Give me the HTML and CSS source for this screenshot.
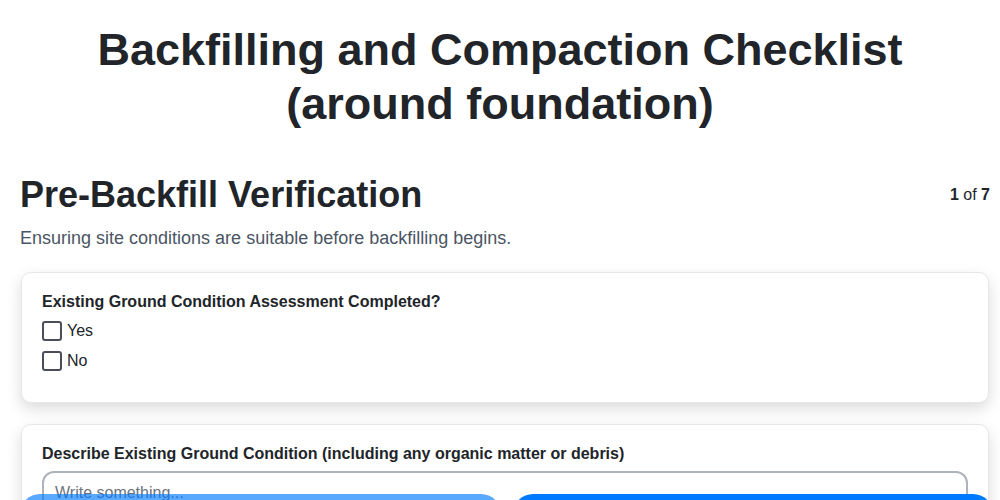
FILE: index.html
```html
<!DOCTYPE html>
<html lang="en">
<head>
<meta charset="utf-8">
<title>Backfilling and Compaction Checklist</title>
<link rel="stylesheet" href="styles.css">
</head>
<body>
<main class="page">
  <h1 class="title">Backfilling and Compaction Checklist (around foundation)</h1>
  <section class="section">
    <div class="section-head">
      <h2 class="section-title">Pre-Backfill Verification</h2>
      <div class="counter"><b>1</b> of <b>7</b></div>
    </div>
    <p class="section-desc">Ensuring site conditions are suitable before backfilling begins.</p>

    <div class="card">
      <div class="q-label">Existing Ground Condition Assessment Completed?</div>
      <label class="option"><span class="box"></span><span>Yes</span></label>
      <label class="option"><span class="box"></span><span>No</span></label>
    </div>

    <div class="card">
      <div class="q-label">Describe Existing Ground Condition (including any organic matter or debris)</div>
      <textarea class="text-input" placeholder="Write something..."></textarea>
    </div>
  </section>
</main>
<footer class="nav">
  <button class="btn btn-prev" disabled>Previous</button>
  <button class="btn btn-next">Next</button>
</footer>
</body>
</html>
```
FILE: styles.css
```css
* { box-sizing: border-box; }
html, body { margin: 0; padding: 0; background: #fff; }
body {
  font-family: "Liberation Sans", Arial, sans-serif;
  color: #212529;
}
.page {
  padding: 23px 10px 80px;
}
.title {
  margin: 0 auto;
  max-width: 860px;
  text-align: center;
  font-size: 45px;
  line-height: 54px;
  font-weight: 700;
}
.section {
  margin-top: 42px;
  padding-left: 10px;
}
.section-head {
  display: flex;
  justify-content: space-between;
  align-items: center;
}
.section-title {
  margin: 0;
  font-size: 36px;
  line-height: 43px;
  font-weight: 700;
}
.counter {
  font-size: 16px;
  color: #212529;
}
.section-desc {
  margin: 10px 0 0;
  font-size: 18px;
  line-height: 24px;
  color: #4b5563;
}
.card {
  margin-top: 22px;
  margin-left: 1px;
  margin-right: 1px;
  background: #fff;
  border: 1px solid #e5e7eb;
  border-radius: 10px;
  box-shadow: 0 6px 15px rgba(0, 0, 0, 0.14);
  padding: 19px 20px 26px;
}
.card + .card { margin-top: 21px; }
.q-label {
  font-size: 16px;
  line-height: 20px;
  font-weight: 700;
  margin-bottom: 4px;
}
.option {
  display: flex;
  align-items: center;
  gap: 5px;
  height: 30px;
  font-size: 16px;
}
.box {
  width: 20px;
  height: 20px;
  border: 2px solid #4a4d5c;
  border-radius: 3px;
  background: #fff;
}
.text-input {
  display: block;
  width: 100%;
  height: 100px;
  margin-top: 7px;
  border: 2px solid #adb3bb;
  border-radius: 12px;
  padding: 11px 11px;
  font-family: "Liberation Sans", Arial, sans-serif;
  font-size: 16px;
  color: #212529;
  resize: none;
}
.text-input::placeholder { color: #6b7280; }
.nav {
  position: fixed;
  left: 0;
  right: 0;
  bottom: -50px;
  display: flex;
  gap: 12px;
  padding: 0 7px 0 20px;
}
.btn {
  flex: 1;
  height: 56px;
  border: none;
  border-radius: 20px;
  background: #007bff;
  color: #fff;
  font-family: "Liberation Sans", Arial, sans-serif;
  font-size: 16px;
  line-height: 20px;
  padding: 18px 0 0;
  display: flex;
  justify-content: center;
  align-items: flex-start;
}
.btn-prev { opacity: 0.65; }
```
